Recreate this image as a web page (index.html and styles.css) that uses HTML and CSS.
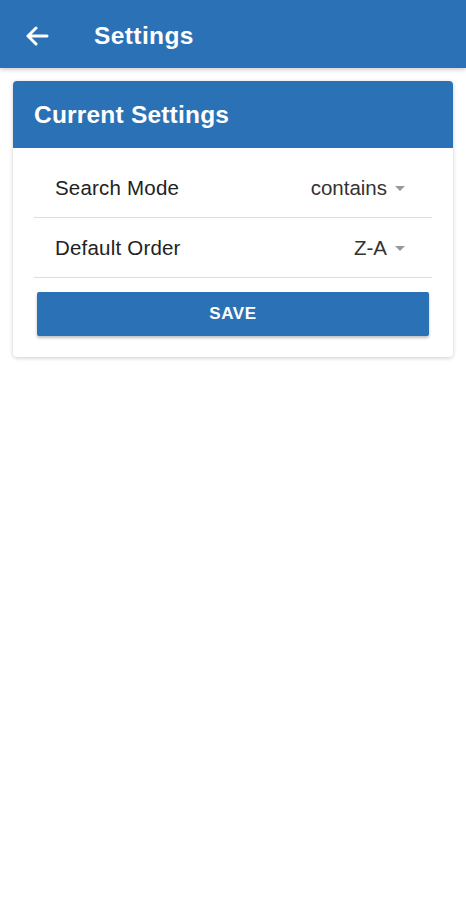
FILE: index.html
```html
<!DOCTYPE html>
<html lang="en">
<head>
  <meta charset="UTF-8" />
  <meta name="viewport" content="width=device-width, initial-scale=1.0"/>
  <title>Settings</title>
  <link rel="stylesheet" href="styles.css">
</head>
<body>

  <!-- Toolbar -->
  <header class="toolbar">
    <button class="back-btn" aria-label="Back">
      <svg width="24" height="20" viewBox="0 0 24 20">
        <path d="M22 10H3M11 2L3 10l8 8" fill="none" stroke="#fff" stroke-width="3" stroke-linecap="round" stroke-linejoin="round"/>
      </svg>
    </button>
    <h1>Settings</h1>
  </header>

  <main class="content">
    <div class="card">
      <div class="card-header">Current Settings</div>
      <div class="card-body">
        <div class="row">
          <span class="label">Search Mode</span>
          <span class="select">contains <i class="caret"></i></span>
        </div>
        <div class="row">
          <span class="label">Default Order</span>
          <span class="select">Z-A <i class="caret"></i></span>
        </div>
        <button class="save-btn">SAVE</button>
      </div>
    </div>
  </main>

</body>
</html>
```

FILE: styles.css
```css
body {
  margin: 0;
  font-family: "Liberation Sans", Arial, sans-serif;
  background: #fff;
  color: #222;
}
.toolbar {
  height: 68px;
  box-sizing: border-box;
  padding-top: 3px;
  background: #2b71b5;
  display: flex;
  align-items: center;
  box-shadow: 0 2px 4px rgba(0,0,0,0.18);
  position: relative;
}
.back-btn {
  background: none;
  border: none;
  padding: 0;
  margin-left: 25px;
  width: 24px;
  height: 20px;
  display: flex;
}
.toolbar h1 {
  margin: 0 0 0 45px;
  color: white;
  font-size: 24.5px;
  font-weight: bold;
  letter-spacing: 0.4px;
}
.content {
  padding: 13px;
}
.card {
  border-radius: 4px;
  overflow: hidden;
  background: white;
  box-shadow: 0 1px 4px rgba(0,0,0,0.2);
}
.card-header {
  background: #2b71b5;
  color: white;
  height: 67px;
  box-sizing: border-box;
  padding: 1px 0 0 21px;
  display: flex;
  align-items: center;
  font-size: 24.5px;
  font-weight: bold;
  letter-spacing: 0.2px;
}
.card-body {
  padding: 10px 21px 21px;
  display: flex;
  flex-direction: column;
}
.row {
  height: 60px;
  box-sizing: border-box;
  padding: 1px 27px 0 21px;
  border-bottom: 1px solid #ddd;
  display: flex;
  align-items: center;
  justify-content: space-between;
  font-size: 20.5px;
}
.label {
  color: #222;
  letter-spacing: 0.2px;
}
.select {
  color: #333;
  display: flex;
  align-items: center;
  gap: 8px;
}
.caret {
  width: 0;
  height: 0;
  border-left: 5px solid transparent;
  border-right: 5px solid transparent;
  border-top: 5px solid #999;
}
.save-btn {
  margin: 14px 3px 0;
  height: 44px;
  background: #2b71b5;
  color: white;
  border: none;
  border-radius: 2px;
  font-family: inherit;
  font-size: 17px;
  font-weight: bold;
  letter-spacing: 0.6px;
  box-shadow: 0 2px 3px rgba(0,0,0,0.25);
}
```
